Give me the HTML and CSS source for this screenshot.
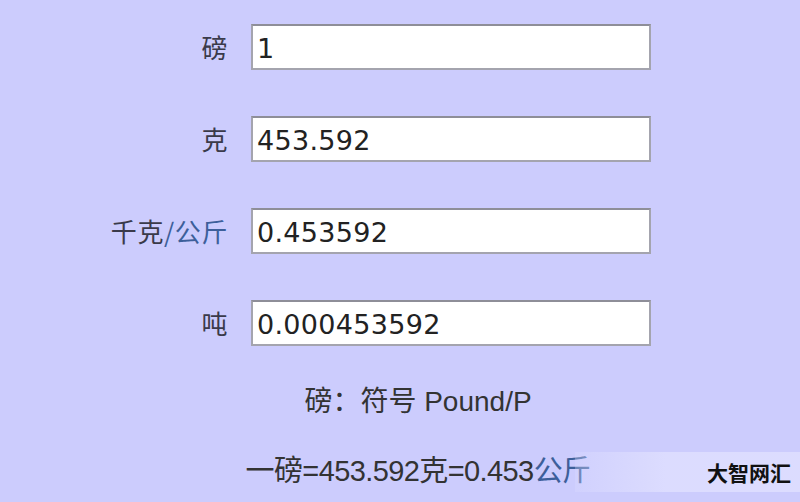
FILE: index.html
```html
<!DOCTYPE html>
<html lang="zh">
<head>
<meta charset="utf-8">
<title>磅换算</title>
<link rel="stylesheet" href="styles.css">
</head>
<body>
<div class="page">
  <form class="converter">
    <label class="lbl" for="lb">磅</label>
    <input class="field" id="lb" type="text" value="1">
    <label class="lbl" for="g">克</label>
    <input class="field" id="g" type="text" value="453.592">
    <label class="lbl" for="kg">千克<a class="link" href="#">/公斤</a></label>
    <input class="field" id="kg" type="text" value="0.453592">
    <label class="lbl" for="t">吨</label>
    <input class="field" id="t" type="text" value="0.000453592">
  </form>
  <p class="note">磅：符号 Pound/P</p>
  <p class="note note-eq">一磅=453.592克=0.453<span class="blue">公斤</span></p>
  <div class="brand"><span>大智网汇</span></div>
</div>
</body>
</html>
```
FILE: styles.css
```css
html, body {
  margin: 0;
  padding: 0;
  background: #ccccfd;
}

.page {
  position: relative;
  width: 800px;
  height: 502px;
  overflow: hidden;
  font-family: "DejaVu Sans", "Noto Sans CJK SC", sans-serif;
  color: #333;
}

.converter {
  display: grid;
  grid-template-columns: 228px 400px;
  column-gap: 23px;
  row-gap: 46px;
  padding-top: 24px;
  align-items: center;
}

.lbl {
  justify-self: end;
  font-family: "Noto Sans CJK SC", sans-serif;
  font-size: 26px;
  letter-spacing: 0.6px;
  color: #3a3a4a;
  line-height: 1;
}

.link {
  color: #3d5f9a;
  text-decoration: none;
}

.field {
  box-sizing: border-box;
  width: 400px;
  height: 46px;
  margin: 0;
  padding: 2px 4px 0;
  border: 2px solid #a4a4ae;
  border-top-color: #8e8e98;
  background: #fff;
  font-family: "DejaVu Sans", sans-serif;
  font-size: 27px;
  letter-spacing: 0.3px;
  color: #222;
  outline: none;
}

.note {
  margin: 0;
  padding-left: 36px;
  text-align: center;
  font-family: "Liberation Sans", "Noto Sans CJK SC", sans-serif;
  font-size: 28px;
  color: #333;
  line-height: 1;
}

.note:first-of-type {
  margin-top: 42px;
}

.note-eq {
  margin-top: 41px;
  font-size: 29px;
  letter-spacing: -0.6px;
}

.blue {
  color: #3d5f9a;
}

.brand {
  position: absolute;
  left: 575px;
  top: 452px;
  width: 225px;
  height: 40px;
  display: flex;
  align-items: center;
  justify-content: flex-end;
  padding-right: 9px;
  box-sizing: border-box;
  background: linear-gradient(90deg, rgba(220, 220, 255, 0.3), rgba(224, 224, 255, 0.8) 40%);
}

.brand span {
  font-family: "Noto Sans CJK SC", sans-serif;
  font-weight: 700;
  font-size: 21px;
  color: #111;
}
```
